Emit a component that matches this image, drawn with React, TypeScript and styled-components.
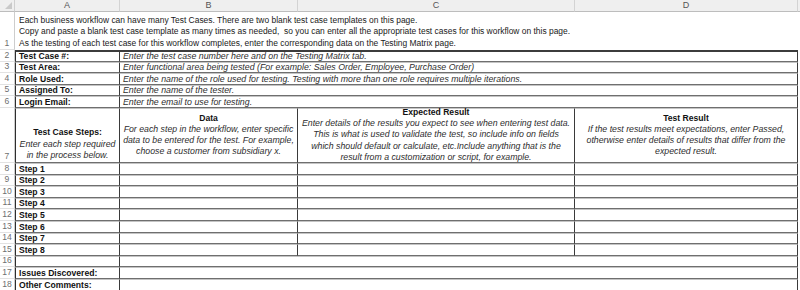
import React from "react";
import styled, { createGlobalStyle, css } from "styled-components";

const Global = createGlobalStyle`
  html, body { margin: 0; padding: 0; background: #ffffff; }
  body { font-family: "Liberation Sans", Arial, sans-serif; }
  * { box-sizing: border-box; }
`;

const ROW = 11.6;

const Sheet = styled.div`
  display: grid;
  grid-template-columns: 15px 105px 178px 277px 223px 2px;
  grid-template-rows: 12px 38px repeat(5, ${ROW}px) 55px repeat(11, ${ROW}px);
  width: 800px;
  height: 290px;
  overflow: hidden;
  font-size: 8.6px;
  line-height: 11.6px;
  color: #1c1c1c;
`;

const Corner = styled.div`
  position: relative;
  background: #efefef;
  border-right: 1px solid #cfcfcf;
  border-bottom: 1px solid #bdbdbd;
  &::after {
    content: "";
    position: absolute;
    right: 2px;
    bottom: 2px;
    width: 0;
    height: 0;
    border-left: 7px solid transparent;
    border-bottom: 7px solid #c9c9c9;
  }
`;

const ColHead = styled.div`
  background: #efefef;
  border-right: 1px solid #d3d3d3;
  border-bottom: 1px solid #bdbdbd;
  color: #555;
  font-size: 9px;
  display: flex;
  align-items: center;
  justify-content: center;
`;

const ColFill = styled.div`
  background: #efefef;
  border-bottom: 1px solid #bdbdbd;
`;

const RowNum = styled.div`
  color: #6f6f6f;
  font-size: 8.6px;
  border-right: 1px solid #cdcdcd;
  border-bottom: 1px solid #e2e2e2;
  display: flex;
  align-items: flex-end;
  justify-content: center;
  line-height: 11px;
`;

const Intro = styled.div`
  grid-column: span 5;
  padding: 2px 0 0 4px;
  white-space: nowrap;
  display: flex;
  flex-direction: column;
  justify-content: flex-end;
  font-size: 8.45px;
  line-height: 11.8px;
  color: #1a1a1a;
`;

const Cell = styled.div<{
  $span?: number;
  $bold?: boolean;
  $italic?: boolean;
  $left?: boolean;
  $first?: boolean;
}>`
  grid-column: span ${(p) => p.$span ?? 1};
  display: flex;
  align-items: flex-end;
  padding: 0 3px;
  white-space: nowrap;
  overflow: visible;
  line-height: 10px;
  border-bottom: 1px solid #6f6f6f;
  border-top: ${(p) => (p.$first ? "2px solid #3c3c3c" : "1px solid #c4c4c4")};
  border-left: ${(p) => (p.$left ? "1px solid #2e2e2e" : "none")};
  border-right: 1px solid #3a3a3a;
  ${(p) =>
    p.$bold &&
    css`
      font-weight: 700;
      color: #111;
    `}
  ${(p) =>
    p.$italic &&
    css`
      font-style: italic;
      font-size: 8.8px;
      color: #2e2e2e;
    `}
`;

const HeadCell = styled.div<{ $left?: boolean; $valign: "center" | "end" }>`
  display: flex;
  flex-direction: column;
  align-items: center;
  justify-content: ${(p) => (p.$valign === "center" ? "center" : "flex-end")};
  text-align: center;
  line-height: 11.2px;
  padding: 0 2px 1px;
  border-top: 1px solid #c4c4c4;
  border-bottom: 1px solid #6f6f6f;
  border-left: ${(p) => (p.$left ? "1px solid #2e2e2e" : "none")};
  border-right: 1px solid #3a3a3a;
  white-space: nowrap;
`;

const Title = styled.div`
  font-weight: 700;
  color: #111;
`;

const Note = styled.div`
  font-style: italic;
  font-size: 8.75px;
  color: #2e2e2e;
`;

const Gap = styled.div``;

const infoRows: [string, string][] = [
  ["Test Case #:", "Enter the test case number here and on the Testing Matrix tab."],
  ["Test Area:", "Enter functional area being tested (For example: Sales Order, Employee, Purchase Order)"],
  ["Role Used:", "Enter the name of the role used for testing. Testing with more than one role requires multiple iterations."],
  ["Assigned To:", "Enter the name of the tester."],
  ["Login Email:", "Enter the email to use for testing."],
];

const steps = ["Step 1", "Step 2", "Step 3", "Step 4", "Step 5", "Step 6", "Step 7", "Step 8", ""];

export default function App() {
  return (
    <>
      <Global />
      <Sheet>
        <Corner />
        <ColHead>A</ColHead>
        <ColHead>B</ColHead>
        <ColHead>C</ColHead>
        <ColHead>D</ColHead>
        <ColFill />

        <RowNum>1</RowNum>
        <Intro>
          <div>Each business workflow can have many Test Cases. There are two blank test case templates on this page.</div>
          <div>Copy and paste a blank test case template as many times as needed,&nbsp; so you can enter all the appropriate test cases for this workflow on this page.</div>
          <div>As the testing of each test case for this workflow completes, enter the corresponding data on the Testing Matrix page.</div>
        </Intro>

        {infoRows.map(([label, text], i) => (
          <React.Fragment key={label}>
            <RowNum>{i + 2}</RowNum>
            <Cell $bold $left $first={i === 0}>{label}</Cell>
            <Cell $italic $span={3} $first={i === 0}>{text}</Cell>
            <Gap />
          </React.Fragment>
        ))}

        <RowNum>7</RowNum>
        <HeadCell $left $valign="end">
          <Title>Test Case Steps:</Title>
          <Note>Enter each step required</Note>
          <Note>in the process below.</Note>
        </HeadCell>
        <HeadCell $valign="center">
          <Title>Data</Title>
          <Note>For each step in the workflow, enter specific</Note>
          <Note>data to be entered for the test. For example,</Note>
          <Note>choose a customer from subsidiary x.</Note>
        </HeadCell>
        <HeadCell $valign="center">
          <Title>Expected Result</Title>
          <Note>Enter details of the results you expect to see when entering test data.</Note>
          <Note>This is what is used to validate the test, so include info on fields</Note>
          <Note>which should default or calculate, etc.Include anything that is the</Note>
          <Note>result from a customization or script, for example.</Note>
        </HeadCell>
        <HeadCell $valign="center">
          <Title>Test Result</Title>
          <Note>If the test results meet expectations, enter Passed,</Note>
          <Note>otherwise enter details of results that differ from the</Note>
          <Note>expected result.</Note>
        </HeadCell>
        <Gap />

        {steps.map((s, i) => (
          <React.Fragment key={i}>
            <RowNum>{i + 8}</RowNum>
            <Cell $bold $left>{s}</Cell>
            {i < 8 ? (
              <>
                <Cell />
                <Cell />
                <Cell />
              </>
            ) : (
              <Cell $span={3} />
            )}
            <Gap />
          </React.Fragment>
        ))}

        {["Issues Discovered:", "Other Comments:"].map((label, i) => (
          <React.Fragment key={label}>
            <RowNum>{i + 17}</RowNum>
            <Cell $bold $left>{label}</Cell>
            <Cell $span={3} />
            <Gap />
          </React.Fragment>
        ))}
      </Sheet>
    </>
  );
}
